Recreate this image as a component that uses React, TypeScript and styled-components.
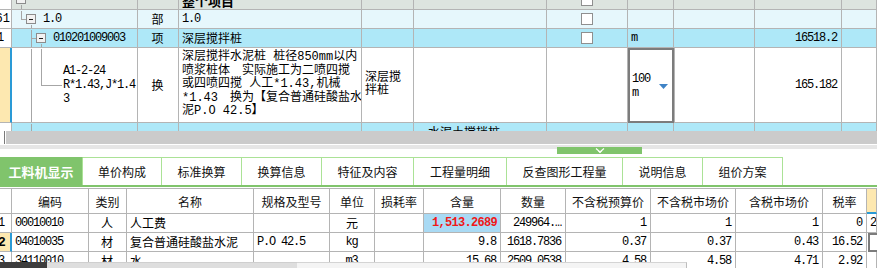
import React, { FC, ReactNode } from "react"
import styled, { createGlobalStyle } from "styled-components"

const LINE = "#b4b4b4"
const GREEN = "#80c46c"
const TAB_LINE = "#abe296"
const MARK_BLUE = "#2a9ad6"
const MARK_YELLOW = "#fde8b0"

const GlobalStyle = createGlobalStyle`
  html, body {
    margin: 0;
    padding: 0;
    background: #fff;
  }
  body {
    font-family: "Liberation Mono", "Noto Sans CJK SC", monospace;
    font-size: 12px;
    color: #000;
    overflow: hidden;
  }
`

type Align = "left" | "center" | "right"

const topCols = "12px 126px 41px 183px 52px 133px 81px 46px 81px 87px 35px"
const botCols =
  "12px 77px 38px 127px 76px 45px 49px 77px 65px 85px 85px 87px 44px 10px"

const tabs = [
  { label: "工料机显示", width: 83 },
  { label: "单价构成", width: 79 },
  { label: "标准换算", width: 80 },
  { label: "换算信息", width: 80 },
  { label: "特征及内容", width: 92 },
  { label: "工程量明细", width: 93 },
  { label: "反查图形工程量", width: 116 },
  { label: "说明信息", width: 80 },
  { label: "组价方案", width: 80 },
]

const headers = [
  "",
  "编码",
  "类别",
  "名称",
  "规格及型号",
  "单位",
  "损耗率",
  "含量",
  "数量",
  "不含税预算价",
  "不含税市场价",
  "含税市场价",
  "税率",
]

const rows = [
  {
    no: "1",
    code: "00010010",
    kind: "人",
    name: "人工费",
    spec: "",
    unit: "元",
    amount: "1,513.2689",
    qty: "249964.…",
    p1: "1",
    p2: "1",
    p3: "1",
    tax: "0",
  },
  {
    no: "2",
    code: "04010035",
    kind: "材",
    name: "复合普通硅酸盐水泥",
    spec: "P.O 42.5",
    unit: "kg",
    amount: "9.8",
    qty: "1618.7836",
    p1: "0.37",
    p2: "0.37",
    p3: "0.43",
    tax: "16.52",
  },
  {
    no: "3",
    code: "34110010",
    kind: "材",
    name: "水",
    spec: "",
    unit: "m3",
    amount: "15.68",
    qty: "2509.0538",
    p1: "4.58",
    p2: "4.58",
    p3: "4.71",
    tax: "2.92",
  },
]

const TreeLine: FC<{ x1: number; y1: number; x2: number; y2: number }> = ({
  x1,
  y1,
  x2,
  y2,
}) => (
  <line
    x1={x1 + 0.5}
    y1={y1 + 0.5}
    x2={x2 + 0.5}
    y2={y2 + 0.5}
    stroke="#a6a6a6"
    shapeRendering="crispEdges"
  />
)

const TreeBox: FC<{ x: number; y: number }> = ({ x, y }) => (
  <g>
    <rect
      x={x + 0.5}
      y={y + 0.5}
      width={9}
      height={9}
      fill="#f2f2f2"
      stroke="#8c8c8c"
      shapeRendering="crispEdges"
    />
    <line
      x1={x + 3}
      y1={y + 5}
      x2={x + 7}
      y2={y + 5}
      stroke="#1e1e1e"
      shapeRendering="crispEdges"
    />
  </g>
)

const Tree: FC<{ w: number; h: number; children: ReactNode }> = ({
  w,
  h,
  children,
}) => (
  <TreeSvg width={w} height={h} viewBox={`0 0 ${w} ${h}`}>
    {children}
  </TreeSvg>
)

const App: FC = () => {
  return (
    <Page>
      <GlobalStyle />

      <TopArea>
        <TopGrid>
          <TopRow $bg="#dde4df" $h={19}>
            <RowNum $bg="#fff" />
            <TreeCell>
              <Tree w={20} h={18}>
                <TreeBox x={4} y={3} />
                <TreeLine x1={9} y1={13} x2={9} y2={18} />
              </Tree>
            </TreeCell>
            <Cell />
            <Cell $bold>整个项目</Cell>
            <Cell />
            <Cell />
            <Cell $align="center">
              <Check />
            </Cell>
            <Cell />
            <Cell />
            <Cell />
            <Cell />
          </TopRow>

          <TopRow $bg="#e6f7fc" $h={19}>
            <RowNum $bg="#fff" $align="right">
              61
            </RowNum>
            <TreeCell>
              <Tree w={31} h={18}>
                <TreeLine x1={9} y1={0} x2={9} y2={9} />
                <TreeLine x1={9} y1={9} x2={14} y2={9} />
                <TreeBox x={14} y={4} />
                <TreeLine x1={19} y1={14} x2={19} y2={18} />
              </Tree>
              <Ascii>1.0</Ascii>
            </TreeCell>
            <Cell $align="center">部</Cell>
            <Cell $ascii>1.0</Cell>
            <Cell />
            <Cell />
            <Cell $align="center">
              <Check />
            </Cell>
            <Cell />
            <Cell />
            <Cell />
            <Cell />
          </TopRow>

          <TopRow $bg="#aee8f8" $h={19}>
            <RowNum $bg="#fff" $indent={-3}>
              1
            </RowNum>
            <TreeCell>
              <Tree w={41} h={18}>
                <TreeLine x1={19} y1={0} x2={19} y2={18} />
                <TreeLine x1={19} y1={9} x2={24} y2={9} />
                <TreeBox x={24} y={4} />
                <TreeLine x1={29} y1={14} x2={29} y2={18} />
              </Tree>
              <Ascii>010201009003</Ascii>
            </TreeCell>
            <Cell $align="center">项</Cell>
            <Cell>深层搅拌桩</Cell>
            <Cell />
            <Cell />
            <Cell $align="center">
              <Check />
            </Cell>
            <Cell $ascii>m</Cell>
            <Cell />
            <Cell $align="right" $ascii>
              16518.2
            </Cell>
            <Cell />
          </TopRow>

          <TopRow $bg="#fff" $h={75}>
            <RowNum $bg={MARK_YELLOW} $mark />
            <TreeCell>
              <Tree w={51} h={74}>
                <TreeLine x1={19} y1={0} x2={19} y2={74} />
                <TreeLine x1={29} y1={0} x2={29} y2={37} />
                <TreeLine x1={29} y1={37} x2={49} y2={37} />
              </Tree>
              <Ascii $lines>{"A1-2-24\nR*1.43,J*1.4\n3"}</Ascii>
            </TreeCell>
            <Cell $align="center">换</Cell>
            <Cell $lines>
              {
                "深层搅拌水泥桩 桩径850mm以内\n喷浆桩体　实际施工为二喷四搅\n或四喷四搅 人工*1.43,机械\n*1.43　换为【复合普通硅酸盐水\n泥P.O 42.5】"
              }
            </Cell>
            <Cell $lines>{"深层搅\n拌桩"}</Cell>
            <Cell />
            <Cell />
            <UnitEditor>
              <Ascii $lines>{"100\nm"}</Ascii>
              <svg width="9" height="5" viewBox="0 0 9 5">
                <polygon points="0,0 9,0 4.5,5" fill="#3f83c6" />
              </svg>
            </UnitEditor>
            <Cell />
            <Cell $align="right" $ascii>
              165.182
            </Cell>
            <Cell />
          </TopRow>

          <TopRow $bg="#aee8f8" $h={19}>
            <RowNum $bg="#fff" />
            <TreeCell>
              <Tree w={20} h={18}>
                <TreeLine x1={19} y1={0} x2={19} y2={18} />
              </Tree>
            </TreeCell>
            <Cell />
            <Cell />
            <Cell />
            <Cell $pad={14}>水泥土搅拌桩</Cell>
            <Cell />
            <Cell />
            <Cell />
            <Cell />
            <Cell />
          </TopRow>
        </TopGrid>
      </TopArea>

      <HScroll>
        <ScrollTrack />
      </HScroll>

      <Splitter>
        <SplitHandle>
          <svg width="10" height="6" viewBox="0 0 10 6">
            <polyline
              points="1,0.5 5,4 9,0.5"
              fill="none"
              stroke="#fff"
              strokeWidth="1.2"
            />
            <polyline
              points="3,3 5,5 7,3"
              fill="none"
              stroke="#e8f5e3"
              strokeWidth="1"
            />
          </svg>
        </SplitHandle>
      </Splitter>

      <TabBar>
        {tabs.map((tab, i) => (
          <Tab key={tab.label} $active={i === 0} $w={tab.width}>
            {tab.label}
          </Tab>
        ))}
      </TabBar>

      <BottomTable>
        <BotRow $h={25}>
          {headers.map((h, i) => (
            <HeadCell key={i}>{h}</HeadCell>
          ))}
          <HeadCell $marked />
        </BotRow>

        {rows.map((r, i) => (
          <BotRow key={r.code} $h={19}>
            <RowNum
              $bg={i === 1 ? MARK_YELLOW : "#fff"}
              $mark={i === 1}
              $bold={i === 1}
              $indent={-2}>
              {r.no}
            </RowNum>
            <Cell $ascii>{r.code}</Cell>
            <Cell $align="center">{r.kind}</Cell>
            <Cell>{r.name}</Cell>
            <Cell $ascii>{r.spec}</Cell>
            <Cell $align="center" $ascii>
              {r.unit}
            </Cell>
            <Cell />
            {i === 0 ? (
              <AmountCell>{r.amount}</AmountCell>
            ) : (
              <Cell $align="right" $ascii>
                {r.amount}
              </Cell>
            )}
            <Cell $align="right" $ascii>
              {r.qty}
            </Cell>
            <Cell $align="right" $ascii>
              {r.p1}
            </Cell>
            <Cell $align="right" $ascii>
              {r.p2}
            </Cell>
            <Cell $align="right" $ascii>
              {r.p3}
            </Cell>
            <Cell $align="right" $ascii>
              {r.tax}
            </Cell>
            {i === 1 ? <EdgeSelected /> : <Cell $ascii>{i === 0 ? "2" : ""}</Cell>}
          </BotRow>
        ))}
      </BottomTable>

      <BottomStrip>
        <StripDark />
        <StripMid />
        <StripLight />
      </BottomStrip>
    </Page>
  )
}

export default App

const Page = styled.div`
  position: relative;
  width: 877px;
  height: 268px;
  overflow: hidden;
  background: #fff;
`

const TopArea = styled.div`
  height: 131px;
  overflow: hidden;
`

const TopGrid = styled.div`
  display: flex;
  flex-direction: column;
  margin-top: -9px;
`

const TopRow = styled.div<{ $bg: string; $h: number }>`
  display: grid;
  grid-template-columns: ${topCols};
  height: ${({ $h }) => $h}px;
  flex: none;
  background: ${({ $bg }) => $bg};
`

const Cell = styled.div<{
  $align?: Align
  $ascii?: boolean
  $bold?: boolean
  $lines?: boolean
  $pad?: number
}>`
  box-sizing: border-box;
  min-width: 0;
  display: flex;
  align-items: center;
  justify-content: ${({ $align }) =>
    $align === "center"
      ? "center"
      : $align === "right"
        ? "flex-end"
        : "flex-start"};
  padding: 0 4px 0 ${({ $pad }) => $pad ?? 3}px;
  border-right: 1px solid ${LINE};
  border-bottom: 1px solid ${LINE};
  overflow: hidden;
  white-space: pre;
  line-height: ${({ $lines }) => ($lines ? "13.5px" : "normal")};
  letter-spacing: ${({ $ascii }) => ($ascii ? "-1.2px" : "normal")};
  font-weight: ${({ $bold }) => ($bold ? "bold" : "normal")};
  font-size: ${({ $bold }) => ($bold ? "13px" : "12px")};
`

const RowNum = styled(Cell)<{
  $bg: string
  $mark?: boolean
  $indent?: number
}>`
  padding: 0 1px 0 0;
  background: ${({ $bg }) => $bg};
  text-indent: ${({ $indent }) => $indent ?? 0}px;
  border-right: ${({ $mark }) =>
    $mark ? `2px solid ${MARK_BLUE}` : `1px solid ${LINE}`};
  letter-spacing: 0;
`

const TreeCell = styled.div`
  box-sizing: border-box;
  display: flex;
  align-items: center;
  border-right: 1px solid ${LINE};
  border-bottom: 1px solid ${LINE};
  overflow: hidden;
`

const TreeSvg = styled.svg`
  display: block;
  flex: none;
  align-self: flex-start;
`

const Ascii = styled.span<{ $lines?: boolean }>`
  white-space: pre;
  letter-spacing: -1.2px;
  line-height: ${({ $lines }) => ($lines ? "14px" : "normal")};
`

const Check = styled.span`
  display: block;
  box-sizing: border-box;
  width: 12px;
  height: 12px;
  margin-left: 1px;
  background: #fff;
  border: 1px solid #8f8f8f;
`

const UnitEditor = styled.div`
  box-sizing: border-box;
  display: flex;
  align-items: center;
  justify-content: space-between;
  padding: 0 6px 0 4px;
  border-right: 1px solid ${LINE};
  border-bottom: 1px solid ${LINE};
  box-shadow: inset 0 0 0 2px #7c7c7c;
  margin: 0 -1px -1px 0;

  svg {
    display: block;
    margin-top: 2px;
  }
`

const HScroll = styled.div`
  display: flex;
  height: 13px;
  padding-left: 4px;
`

const ScrollTrack = styled.div`
  flex: 1;
  border-left: 1px solid #7a7a7a;
  box-shadow: inset 1px 0 #fff;
  background: #cbcbcb;
`

const Splitter = styled.div`
  height: 13px;
  background: linear-gradient(
    to bottom,
    #fff 0 1px,
    #e6e6e6 1px 5px,
    #fff 5px
  );
  display: flex;
  align-items: flex-start;
`

const SplitHandle = styled.div`
  margin: 3px 0 0 557px;
  width: 85px;
  height: 7px;
  background: ${GREEN};
  display: flex;
  justify-content: center;
  align-items: center;

  svg {
    display: block;
  }
`

const TabBar = styled.div`
  display: flex;
  height: 28px;
  border-bottom: 2px solid ${GREEN};
`

const Tab = styled.div<{ $active: boolean; $w: number }>`
  box-sizing: border-box;
  width: ${({ $w }) => $w}px;
  display: flex;
  align-items: center;
  justify-content: center;
  font-family: "Noto Sans CJK SC", sans-serif;
  font-size: ${({ $active }) => ($active ? "13px" : "12px")};
  font-weight: ${({ $active }) => ($active ? "bold" : "normal")};
  color: ${({ $active }) => ($active ? "#fff" : "#111")};
  background: ${({ $active }) => ($active ? GREEN : "#fff")};
  border-top: 1px solid ${({ $active }) => ($active ? GREEN : TAB_LINE)};
  border-right: 1px solid ${TAB_LINE};
`

const BottomTable = styled.div`
  margin-top: 1px;
  border-top: 1px solid ${LINE};
`

const BotRow = styled.div<{ $h: number }>`
  display: grid;
  grid-template-columns: ${botCols};
  height: ${({ $h }) => $h}px;
`

const HeadCell = styled.div<{ $marked?: boolean }>`
  box-sizing: border-box;
  min-width: 0;
  display: flex;
  align-items: center;
  justify-content: center;
  overflow: hidden;
  white-space: nowrap;
  font-family: "Noto Sans CJK SC", sans-serif;
  font-size: 12px;
  color: #111;
  background: ${({ $marked }) => ($marked ? MARK_YELLOW : "#fff")};
  border-right: 1px solid ${LINE};
  border-bottom: ${({ $marked }) =>
    $marked ? `2px solid ${MARK_BLUE}` : `1px solid ${LINE}`};
`

const AmountCell = styled(Cell).attrs({ $align: "right" as Align })`
  background: #a9daf4;
  color: #f01818;
  font-weight: bold;
  letter-spacing: -0.7px;
  padding-right: 3px;
`

const EdgeSelected = styled.div`
  box-sizing: border-box;
  border: 2px solid #7c7c7c;
  border-right: none;
  margin: 0 0 0 1px;
`

const BottomStrip = styled.div`
  position: absolute;
  left: 0;
  bottom: 0;
  width: 687px;
  height: 6px;
  display: flex;
`

const StripDark = styled.div`
  width: 47px;
  background: #3d3d3d;
`

const StripMid = styled.div`
  width: 250px;
  background: #dedede;
  border-top: 1px solid #cfcfcf;
`

const StripLight = styled.div`
  flex: 1;
  background: #f4f4f4;
  border-top: 1px solid #d4d4d4;
  border-right: 1px solid #bdbdbd;
`
